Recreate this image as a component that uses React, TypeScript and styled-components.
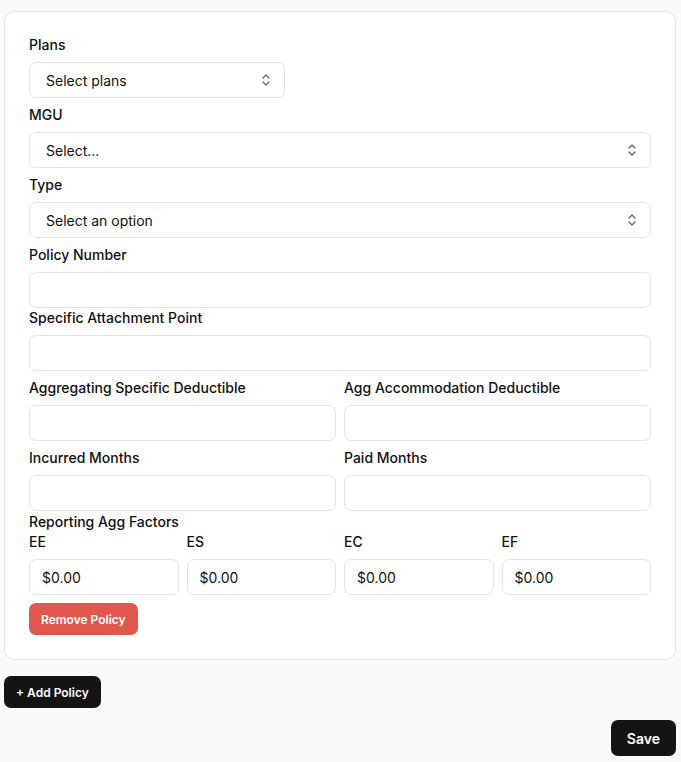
import React from "react";
import styled, { createGlobalStyle } from "styled-components";

const GlobalStyle = createGlobalStyle`
    * { box-sizing: border-box; }
    body {
        margin: 0;
        background: #fafafa;
        font-family: Inter, "Noto Sans", "Liberation Sans", sans-serif;
        color: #111111;
    }
`

const PageStyled = styled.div`
    padding: 11px 5px 7px 4px;
    display: flex;
    flex-direction: column;
`

const CardStyled = styled.div`
    background: #ffffff;
    border: 1px solid #e4e4e4;
    border-radius: 10px;
    padding: 23px 24px 24px 24px;
    display: flex;
    flex-direction: column;
`

const FieldStyled = styled.div<{ top?: number }>`
    display: flex;
    flex-direction: column;
    gap: 7px;
    margin-top: ${(props) => props.top ?? 0}px;
`

const LabelStyled = styled.label`
    font-size: 14px;
    line-height: 20px;
    font-weight: 500;
    color: #111111;
`

const GridStyled = styled.div<{ cols: number; top?: number }>`
    display: grid;
    grid-template-columns: repeat(${(props) => props.cols}, 1fr);
    column-gap: 8px;
    margin-top: ${(props) => props.top ?? 0}px;
`

const SelectBoxStyled = styled.div<{ width?: number }>`
    height: 36px;
    width: ${(props) => (props.width ? `${props.width}px` : "100%")};
    border: 1px solid #e4e4e4;
    border-radius: 7px;
    padding: 0 12px 0 16px;
    display: flex;
    align-items: center;
    justify-content: space-between;
    font-size: 14px;
    color: #111111;
`

const InputStyled = styled.div`
    height: 36px;
    width: 100%;
    border: 1px solid #e4e4e4;
    border-radius: 7px;
    padding: 0 12px;
    display: flex;
    align-items: center;
    font-size: 14px;
    color: #111111;
`

const RemoveButtonStyled = styled.button`
    align-self: flex-start;
    margin-top: 8px;
    height: 32px;
    padding: 0 12px;
    border: none;
    border-radius: 7px;
    background: #e0574d;
    color: #ffffff;
    font-family: inherit;
    font-size: 12px;
    font-weight: 600;
`

const DarkButtonStyled = styled.button<{ big?: boolean }>`
    height: ${(props) => (props.big ? 36 : 32)}px;
    padding: 0 ${(props) => (props.big ? 16 : 12)}px;
    border: none;
    border-radius: 7px;
    background: #141414;
    color: #ffffff;
    font-family: inherit;
    font-size: ${(props) => (props.big ? 14 : 12)}px;
    font-weight: 600;
`

const AddRowStyled = styled.div`
    margin-top: 16px;
    display: flex;
`

const SaveRowStyled = styled.div`
    margin-top: 12px;
    display: flex;
    justify-content: flex-end;
`

const Chevrons = () => (
    <svg width="12" height="16" viewBox="0 0 12 16" fill="none" stroke="#666" strokeWidth="1.3" strokeLinecap="round" strokeLinejoin="round">
        <path d="M3 6l3-3 3 3" />
        <path d="M3 10l3 3 3-3" />
    </svg>
)

const SelectField = ({ label, placeholder, width, top }: { label: string; placeholder: string; width?: number; top?: number }) => (
    <FieldStyled top={top}>
        <LabelStyled>{label}</LabelStyled>
        <SelectBoxStyled width={width}>
            <span>{placeholder}</span>
            <Chevrons />
        </SelectBoxStyled>
    </FieldStyled>
)

const TextField = ({ label, value, top }: { label: string; value?: string; top?: number }) => (
    <FieldStyled top={top}>
        <LabelStyled>{label}</LabelStyled>
        <InputStyled>{value}</InputStyled>
    </FieldStyled>
)

const factors = ["EE", "ES", "EC", "EF"];

const App = () => {
    return (
        <>
            <GlobalStyle />
            <PageStyled>
                <CardStyled>
                    <SelectField label="Plans" placeholder="Select plans" width={256} />
                    <SelectField label="MGU" placeholder="Select..." top={7} />
                    <SelectField label="Type" placeholder="Select an option" top={7} />
                    <TextField label="Policy Number" top={7} />
                    <TextField label="Specific Attachment Point" top={0} />
                    <GridStyled cols={2} top={7}>
                        <TextField label="Aggregating Specific Deductible" />
                        <TextField label="Agg Accommodation Deductible" />
                    </GridStyled>
                    <GridStyled cols={2} top={7}>
                        <TextField label="Incurred Months" />
                        <TextField label="Paid Months" />
                    </GridStyled>
                    <FieldStyled top={1}>
                        <LabelStyled>Reporting Agg Factors</LabelStyled>
                    </FieldStyled>
                    <GridStyled cols={4}>
                        {factors.map((f) => (
                            <TextField key={f} label={f} value="$0.00" />
                        ))}
                    </GridStyled>
                    <RemoveButtonStyled>Remove Policy</RemoveButtonStyled>
                </CardStyled>
                <AddRowStyled>
                    <DarkButtonStyled>+ Add Policy</DarkButtonStyled>
                </AddRowStyled>
                <SaveRowStyled>
                    <DarkButtonStyled big>Save</DarkButtonStyled>
                </SaveRowStyled>
            </PageStyled>
        </>
    )
}

export default App
